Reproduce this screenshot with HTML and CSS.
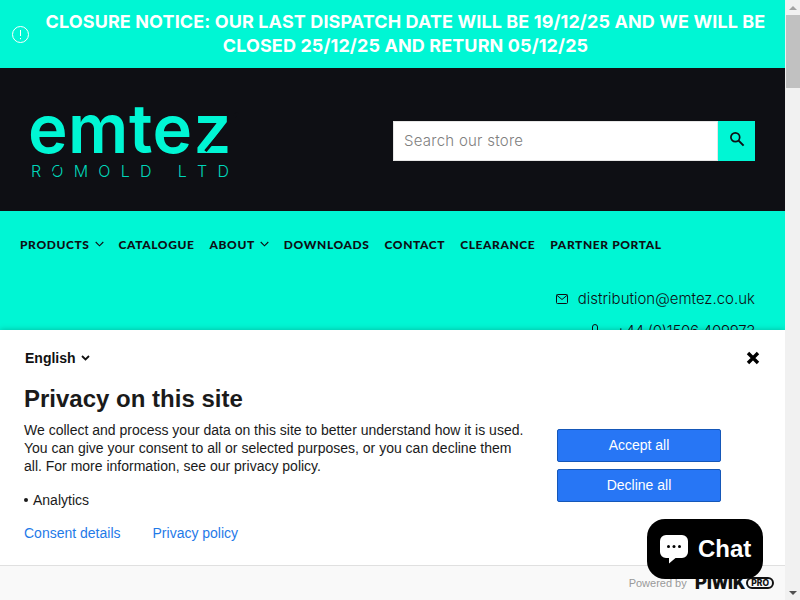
FILE: index.html
```html
<!DOCTYPE html>
<html lang="en">
<head>
<meta charset="utf-8">
<title>Emtez Romold Ltd</title>
<link rel="stylesheet" href="styles.css">
</head>
<body>
<div class="viewport">
  <main class="page">
    <div class="notice">
      <svg class="notice-icon" viewBox="0 0 17 17" width="17" height="17"><circle cx="8.5" cy="8.5" r="8" fill="none" stroke="#fff"/><path d="M8.5 4v6M8.5 12v1.2" stroke="#fff" fill="none"/></svg>
      <p class="notice-text">CLOSURE NOTICE: OUR LAST DISPATCH DATE WILL BE 19/12/25 AND WE WILL BE CLOSED 25/12/25 AND RETURN 05/12/25</p>
    </div>
    <header class="masthead">
      <div class="logo">
        <div class="logo-word"><span>emte</span><span class="logo-z">z</span></div>
        <div class="logo-sub"><span>R</span><span class="logo-o">O</span><span>M</span><span>O</span><span>L</span><span>D</span><span class="logo-gap"></span><span>L</span><span>T</span><span>D</span></div>
      </div>
      <form class="search">
        <div class="search-input">Search our store</div>
        <div class="search-btn">
          <svg viewBox="0 0 16 16" width="16" height="16"><circle cx="6.3" cy="6.3" r="4.4" fill="none" stroke="#0e0f14" stroke-width="1.7"/><path d="M9.6 9.6l5 5" stroke="#0e0f14" stroke-width="2" fill="none"/></svg>
        </div>
      </form>
    </header>
    <nav class="nav">
      <a class="nav-item">PRODUCTS<svg class="chev" viewBox="0 0 9 6" width="9" height="6"><path d="M.7 1l3.8 3.8L8.3 1" fill="none" stroke="#0e0f14" stroke-width="1.1"/></svg></a>
      <a class="nav-item">CATALOGUE</a>
      <a class="nav-item">ABOUT<svg class="chev" viewBox="0 0 9 6" width="9" height="6"><path d="M.7 1l3.8 3.8L8.3 1" fill="none" stroke="#0e0f14" stroke-width="1.1"/></svg></a>
      <a class="nav-item">DOWNLOADS</a>
      <a class="nav-item">CONTACT</a>
      <a class="nav-item">CLEARANCE</a>
      <a class="nav-item">PARTNER PORTAL</a>
    </nav>
    <div class="contact">
      <div class="contact-row">
        <svg viewBox="0 0 12 10" width="12" height="10"><rect x=".5" y=".5" width="11" height="9" rx="1" fill="none" stroke="#0e0f14"/><path d="M.8 1.2L6 5.5l5.2-4.3" fill="none" stroke="#0e0f14"/></svg>
        <span>distribution@emtez.co.uk</span>
      </div>
      <div class="contact-row">
        <svg class="phone-icon" viewBox="0 0 8 14" width="8" height="14"><rect x="1.5" y=".5" width="5" height="13" rx="2.5" fill="none" stroke="#0e0f14"/></svg>
        <span class="phone">+44 (0)1506 409973</span>
      </div>
    </div>

    <section class="consent">
      <div class="consent-body">
        <div class="lang-row">
          <div class="lang">English <svg viewBox="0 0 9 6" width="9" height="6"><path d="M1 1l3.5 3.5L8 1" fill="none" stroke="#111" stroke-width="1.8"/></svg></div>
          <svg class="close" viewBox="0 0 14 14" width="14" height="14"><path d="M2 2l10 10M12 2L2 12" stroke="#000" stroke-width="3.4" fill="none"/></svg>
        </div>
        <div class="consent-main">
          <div class="consent-copy">
            <h1>Privacy on this site</h1>
            <p>We collect and process your data on this site to better understand how it is used. You can give your consent to all or selected purposes, or you can decline them all. For more information, see our privacy policy.</p>
            <ul><li>Analytics</li></ul>
            <div class="links"><a>Consent details</a><a>Privacy policy</a></div>
          </div>
          <div class="actions">
            <button type="button">Accept all</button>
            <button type="button">Decline all</button>
          </div>
        </div>
      </div>
      <footer class="consent-foot">
        <span class="powered">Powered by</span>
        <span class="piwik">PIWIK</span>
        <span class="pro">PRO</span>
      </footer>
    </section>

    <div class="chat">
      <svg viewBox="0 0 30 30" width="30" height="30"><path d="M7 1h16a6 6 0 0 1 6 6v11a6 6 0 0 1-6 6h-6.500l-6.500 5.500v-5.500h-3a6 6 0 0 1-6-6V7a6 6 0 0 1 6-6z" fill="#fff"/><circle cx="9.500" cy="12.500" r="1.500" fill="#000"/><circle cx="15" cy="12.500" r="1.500" fill="#000"/><circle cx="20.500" cy="12.500" r="1.500" fill="#000"/></svg>
      <span>Chat</span>
    </div>
  </main>
  <aside class="scrollbar">
    <div class="arrow-up"></div>
    <div class="thumb"></div>
    <div class="track"></div>
    <div class="arrow-down"></div>
  </aside>
</div>
</body>
</html>
```
FILE: styles.css
```css
* { box-sizing: border-box; }
html, body { margin: 0; height: 100%; overflow: hidden; }
body { font-family: "Liberation Sans", Arial, sans-serif; background: #fff; }

.viewport { display: flex; width: 800px; height: 600px; }
.page { position: relative; width: 785px; height: 600px; overflow: hidden; background: #00f6d4; }

.scrollbar { width: 15px; height: 600px; background: #f1f1f1; display: flex; flex-direction: column; align-items: center; }
.arrow-up { margin-top: 6px; width: 0; height: 0; border-left: 4px solid transparent; border-right: 4px solid transparent; border-bottom: 4px solid #a3a3a3; }
.thumb { margin-top: 5px; width: 15px; height: 73px; background: #c1c1c1; border: 0 solid #f1f1f1; border-width: 0 0 0 1px; }
.track { flex: 1; }
.arrow-down { margin-bottom: 5px; width: 0; height: 0; border-left: 4px solid transparent; border-right: 4px solid transparent; border-top: 4px solid #505050; }

.notice { display: flex; align-items: center; height: 68px; padding: 0 14px 0 12px; gap: 11px; background: #00f6d4; }
.notice-icon { flex: none; }
.notice-text { flex: 1; margin: 0; text-align: center; color: #fff; font-family: Inter, sans-serif; font-weight: 700; font-size: 18px; letter-spacing: .11px; line-height: 24px; }

.masthead { display: flex; justify-content: space-between; align-items: center; height: 143px; padding: 2px 30px 0; background: #0e0f14; }
.logo { width: 200px; color: #00f6d4; }
.logo-word { display: flex; margin-left: -2px; font-family: Inter, sans-serif; font-weight: 600; font-size: 67px; line-height: 52px; letter-spacing: .5px; height: 52px; }
.logo-z { position: relative; display: inline-block; margin-left: 1px; }
.logo-z::after { content: ""; position: absolute; right: 9px; top: 4px; width: 3px; height: 50px; background: #0e0f14; transform: rotate(40deg); }
.logo-sub { display: flex; justify-content: space-between; margin-top: 9px; padding: 0 1px; font-family: Inter, sans-serif; font-weight: 300; font-size: 16px; line-height: 14px; color: #00d6ba; }
.logo-o { position: relative; }
.logo-o::after { content: ""; position: absolute; left: -1px; right: -1px; top: 4px; height: 2px; background: #0e0f14; transform: rotate(-40deg); }
.logo-gap { width: 6px; }

.search { display: flex; width: 362px; height: 40px; }
.search-input { flex: 1; background: #fff; border: 1px solid #e6e6e6; padding-left: 10px; font-family: Inter, sans-serif; font-weight: 300; font-size: 15px; letter-spacing: .25px; line-height: 38px; color: #808080; }
.search-btn { width: 37px; background: #00f6d4; display: flex; align-items: center; justify-content: center; padding-bottom: 3px; }

.nav { display: flex; gap: 15px; padding: 25px 20px 0; height: 67px; }
.nav-item { display: flex; align-items: center; gap: 5px; height: 16px; font-family: Lato, sans-serif; font-weight: 900; font-size: 12px; letter-spacing: .6px; color: #0e0f14; white-space: pre; }

.contact { display: flex; flex-direction: column; align-items: flex-end; padding-right: 30px; gap: 12px; margin-top: 11px; color: #0e0f14; font-family: Inter, sans-serif; font-weight: 300; font-size: 15px; line-height: 20px; }
.contact-row { display: flex; align-items: center; gap: 10px; }
.phone { letter-spacing: -.25px; }
.phone-icon { margin-right: 7px; }

.consent { position: absolute; left: 0; top: 330px; width: 785px; height: 270px; background: #fff; box-shadow: 0 0 6px rgba(0,0,0,.25); display: flex; flex-direction: column; color: #1a1a1a; font-size: 14px; line-height: 18px; }
.consent-body { flex: 1; padding: 19px 24px 0; }
.lang-row { display: flex; justify-content: space-between; align-items: center; height: 18px; }
.lang { display: flex; align-items: center; gap: 5px; padding-left: 1px; font-weight: 700; color: #111; }
.close { margin-right: 1px; }
.consent-main { display: flex; justify-content: space-between; margin-top: 18px; }
.consent-copy { width: 504px; }
.consent-copy h1 { margin: 0 0 8px; font-size: 24px; line-height: 28px; font-weight: 700; color: #1a1a1a; }
.consent-copy p { margin: 0 0 16px; }
.consent-copy ul { margin: 0 0 15px; padding: 0; list-style: none; }
.consent-copy li { padding-left: 9px; position: relative; }
.consent-copy li::before { content: ""; position: absolute; left: 0; top: 7px; width: 4px; height: 4px; border-radius: 50%; background: #1a1a1a; }
.links { display: flex; gap: 32px; color: #1f7ae8; }
.actions { display: flex; flex-direction: column; gap: 7px; width: 164px; margin: 44px 40px 0 0; }
.actions button { height: 33px; padding: 0 0 2px; background: #2776f5; border: 1px solid #1557b8; border-radius: 2px; color: #fff; font: 14px "Liberation Sans", Arial, sans-serif; }

.consent-foot { position: relative; display: flex; align-items: center; justify-content: flex-end; height: 35px; padding-right: 11px; background: #f9f9f9; border-top: 1px solid #e0e0e0; }
.powered { font-size: 11px; color: #9a9a9a; margin-right: 8px; margin-bottom: 1px; }
.piwik { font-family: Roboto, sans-serif; font-weight: 900; font-size: 19px; letter-spacing: -.6px; line-height: 18px; color: #111; margin-right: 2px; }
.pro { border: 2px solid #111; border-radius: 7px; font-family: Inter, sans-serif; font-size: 8.500px; font-weight: 800; line-height: 8px; padding: 0 3px; color: #111; }

.chat { position: absolute; left: 647px; top: 519px; width: 116px; height: 60px; background: #000; border-radius: 18px; display: flex; align-items: center; padding-left: 12px; gap: 9px; color: #fff; font-weight: 700; font-size: 24px; line-height: 28px; }
```
